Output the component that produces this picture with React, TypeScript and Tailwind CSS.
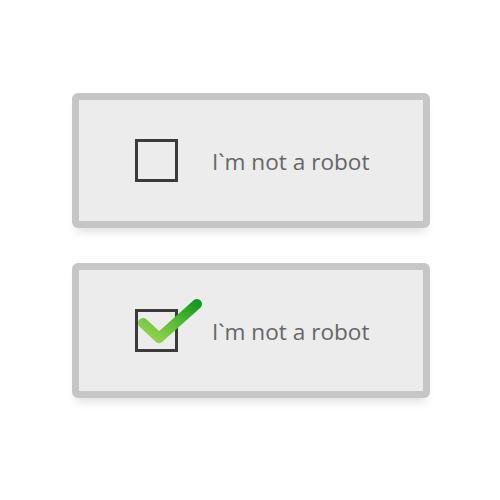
import React from "react";

function Check() {
  return (
    <svg width="74" height="50" viewBox="0 0 74 50" className="absolute left-[-4px] top-[-14px] overflow-visible">
      <defs>
        <linearGradient id="g" x1="0" y1="1" x2="1" y2="0">
          <stop offset="0" stopColor="#9cd651" />
          <stop offset="0.45" stopColor="#62c138" />
          <stop offset="1" stopColor="#139c1c" />
        </linearGradient>
      </defs>
      <path d="M9 25 L25 40 L63 6" fill="none" stroke="url(#g)" strokeWidth="10" strokeLinecap="round" strokeLinejoin="round" />
    </svg>
  );
}

function Card({ checked }: { checked?: boolean }) {
  return (
    <div className="w-[358px] h-[135px] rounded-[6px] border-[7px] border-[#c6c6c6] bg-[#ececec] shadow-[0_8px_10px_-4px_rgba(0,0,0,0.12)] flex items-center pl-[56px]">
      <div className="relative w-[43px] h-[43px] border-[3px] border-[#3b3b3b] shrink-0">
        {checked && <Check />}
      </div>
      <span className="ml-[34px] mt-[3px] text-[22.6px] text-[#666666] leading-none" style={{ fontFamily: '"Open Sans", "Noto Sans", sans-serif' }}>
        I`m not a robot
      </span>
    </div>
  );
}

export default function App() {
  return (
    <div className="w-[500px] h-[500px] bg-white flex flex-col items-start pl-[72px] pt-[93px] gap-[35px]">
      <Card />
      <Card checked />
    </div>
  );
}
